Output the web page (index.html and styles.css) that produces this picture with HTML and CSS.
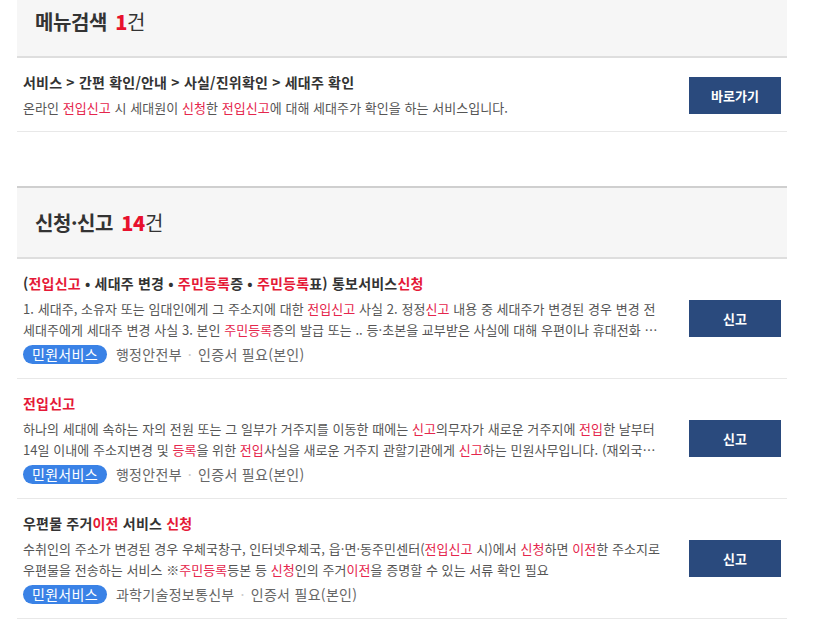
FILE: index.html
```html
<!DOCTYPE html>
<html lang="ko">
<head>
  <meta charset="UTF-8" />
  <meta name="viewport" content="width=device-width, initial-scale=1.0"/>
  <title>통합검색 결과</title>
  <link rel="stylesheet" href="styles.css">
</head>
<body>
  <div class="wrap">

    <div class="section">
      <div class="section-head">
        <h2>메뉴검색 <strong>1</strong><span>건</span></h2>
      </div>
      <div class="item">
        <div class="item-body">
          <p class="path">서비스 &gt; 간편 확인/안내 &gt; 사실/진위확인 &gt; 세대주 확인</p>
          <p class="desc">온라인 <em>전입신고</em> 시 세대원이 <em>신청</em>한 <em>전입신고</em>에 대해 세대주가 확인을 하는 서비스입니다.</p>
        </div>
        <button class="btn">바로가기</button>
      </div>
    </div>

    <div class="section">
      <div class="section-head">
        <h2>신청·신고 <strong>14</strong><span>건</span></h2>
      </div>

      <div class="item">
        <div class="item-body">
          <p class="title">(<em>전입신고</em> • 세대주 변경 • <em>주민등록</em>증 • <em>주민등록</em>표) 통보서비스<em>신청</em></p>
          <p class="desc clamp">1. 세대주, 소유자 또는 임대인에게 그 주소지에 대한 <em>전입신고</em> 사실 2. 정정<em>신고</em> 내용 중 세대주가 변경된 경우 변경 전 세대주에게 세대주 변경 사실 3. 본인 <em>주민등록</em>증의 발급 또는 .. 등·초본을 교부받은 사실에 대해 우편이나 휴대전화 문자메시지로 알려드리는 서비스입니다.</p>
          <div class="meta">
            <span class="tag">민원서비스</span>
            <span class="org">행정안전부</span>
            <span class="dot">·</span>
            <span class="org">인증서 필요(본인)</span>
          </div>
        </div>
        <button class="btn">신고</button>
      </div>

      <div class="item">
        <div class="item-body">
          <p class="title"><em>전입신고</em></p>
          <p class="desc clamp">하나의 세대에 속하는 자의 전원 또는 그 일부가 거주지를 이동한 때에는 <em>신고</em>의무자가 새로운 거주지에 <em>전입</em>한 날부터 14일 이내에 주소지변경 및 <em>등록</em>을 위한 <em>전입</em>사실을 새로운 거주지 관할기관에게 <em>신고</em>하는 민원사무입니다. (재외국민 및 외국인은 별도 절차에 따릅니다.)</p>
          <div class="meta">
            <span class="tag">민원서비스</span>
            <span class="org">행정안전부</span>
            <span class="dot">·</span>
            <span class="org">인증서 필요(본인)</span>
          </div>
        </div>
        <button class="btn">신고</button>
      </div>

      <div class="item">
        <div class="item-body">
          <p class="title">우편물 주거<em>이전</em> 서비스 <em>신청</em></p>
          <p class="desc clamp">수취인의 주소가 변경된 경우 우체국창구, 인터넷우체국, 읍·면·동주민센터(<em>전입신고</em> 시)에서 <em>신청</em>하면 <em>이전</em>한 주소지로 우편물을 전송하는 서비스 ※<em>주민등록</em>등본 등 <em>신청</em>인의 주거<em>이전</em>을 증명할 수 있는 서류 확인 필요</p>
          <div class="meta">
            <span class="tag">민원서비스</span>
            <span class="org">과학기술정보통신부</span>
            <span class="dot">·</span>
            <span class="org">인증서 필요(본인)</span>
          </div>
        </div>
        <button class="btn">신고</button>
      </div>
    </div>

  </div>
</body>
</html>
```

FILE: styles.css
```css
body {
  margin: 0;
  font-family: "Noto Sans CJK KR", "Noto Sans", sans-serif;
  background-color: #fff;
  color: #555;
}
p, h2 {
  margin: 0;
}
em {
  font-style: normal;
  color: #e5264c;
}
.wrap {
  width: 770px;
  margin: -15px 0 0 17px;
}
.section {
  margin-bottom: 54px;
}
.section-head {
  display: flex;
  align-items: center;
  height: 69px;
  padding: 0 18px;
  background-color: #f6f6f6;
  border-top: 2px solid #cfcfcf;
  border-bottom: 2px solid #dedede;
}
.section-head h2 {
  font-size: 20px;
  font-weight: 700;
  color: #333;
  letter-spacing: -0.4px;
}
.section-head h2 strong {
  color: #e8112d;
  margin-left: 3px;
}
.section-head h2 span {
  font-weight: 400;
}
.item {
  display: flex;
  align-items: center;
  padding: 14px 6px 14px;
  border-bottom: 1px solid #e8e8e8;
}
.section:first-child .item {
  padding-bottom: 13px;
}
.item-body {
  flex: 1;
  min-width: 0;
  margin-right: 26px;
}
.path, .title {
  font-size: 14px;
  line-height: 20px;
  font-weight: 700;
  color: #333;
  letter-spacing: 0.2px;
}
.title em {
  color: #e51937;
}
.desc {
  margin-top: 5px;
  font-size: 13px;
  line-height: 21px;
  color: #555;
  letter-spacing: 0.05px;
}
.clamp {
  display: -webkit-box;
  -webkit-line-clamp: 2;
  -webkit-box-orient: vertical;
  overflow: hidden;
}
.meta {
  display: flex;
  align-items: center;
  margin-top: 4px;
  height: 20px;
  font-size: 14px;
  color: #666;
  letter-spacing: 0.3px;
}
.tag {
  height: 19px;
  line-height: 19px;
  padding: 0 9px;
  border-radius: 10px;
  background-color: #3a82e6;
  color: #fff;
  margin-right: 9px;
}
.dot {
  color: #ccc;
  margin: 0 6px;
}
.btn {
  flex: none;
  width: 92px;
  height: 37px;
  border: none;
  background-color: #2a4a7d;
  color: #fff;
  font-family: inherit;
  font-size: 13px;
  font-weight: 700;
  cursor: pointer;
}
.btn:hover {
  background-color: #1f3a66;
}
```
